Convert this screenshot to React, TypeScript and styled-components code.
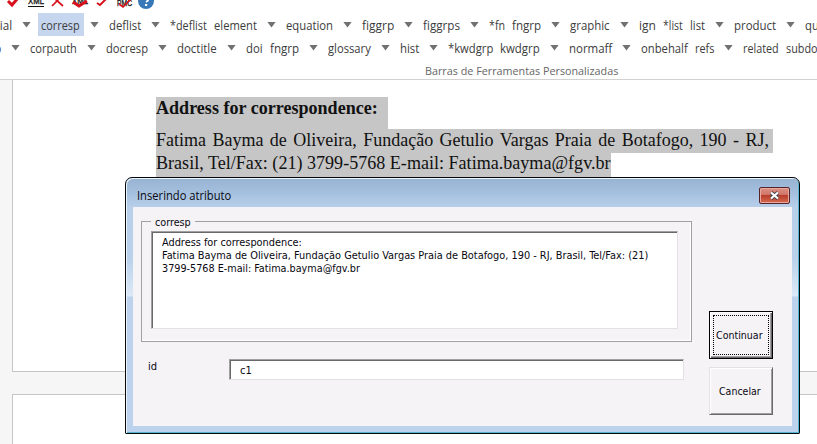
import React, { useLayoutEffect, useRef, useState } from "react";
import styled, { createGlobalStyle, css } from "styled-components";

const GlobalStyle = createGlobalStyle`
  * { box-sizing: border-box; }
  html, body { margin: 0; width: 817px; height: 444px; overflow: hidden; background: #fff; }
`;

const Screen = styled.div`
  position: relative;
  width: 817px;
  height: 444px;
  overflow: hidden;
  background: #fff;
`;

const FitBox = styled.span<{ $w: number }>`
  display: inline-block;
  flex: none;
  width: ${(p) => p.$w}px;
  white-space: nowrap;
`;
const FitInner = styled.span`
  display: inline-block;
  transform-origin: 0 50%;
`;

/* Condenses or stretches its label to an exact width. */
function Fit({ w, children }: { w: number; children: string }) {
  const ref = useRef<HTMLSpanElement>(null);
  const [scale, setScale] = useState(1);
  useLayoutEffect(() => {
    if (ref.current) setScale(w / ref.current.offsetWidth);
  }, [w, children]);
  return (
    <FitBox $w={w}>
      <FitInner ref={ref} style={{ transform: `scaleX(${scale})` }}>
        {children}
      </FitInner>
    </FitBox>
  );
}

const Ribbon = styled.header`
  height: 80px;
  border-bottom: 1px solid #d2d2d2;
  font: 12px/20px "Open Sans", "Noto Sans", sans-serif;
  color: #3c3c3c;
  overflow: hidden;
`;
const IconStrip = styled.div`
  height: 13px;
  svg { display: block; }
`;
const ToolRow = styled.div<{ $indent: number }>`
  display: flex;
  align-items: center;
  height: 23px;
  margin-left: ${(p) => p.$indent}px;
  white-space: nowrap;
`;
const Tool = styled.div<{ $active?: boolean; $menu?: boolean }>`
  display: flex;
  flex: none;
  align-items: center;
  height: 23px;
  padding-top: 2px;
  margin-right: ${(p) => (p.$menu ? 10 : 7)}px;
  ${(p) =>
    p.$active &&
    css`
      background: linear-gradient(#c6d6ee, #c6d6ee) no-repeat 0 0 / 46px 23px;
      margin-left: -3px;
      padding-left: 3px;
    `}
`;
const Caret = styled.i`
  width: 9px;
  height: 6px;
  margin: -2px 0 0 10px;
  background: #717171;
  clip-path: polygon(0 0, 100% 0, 50% 100%);
`;
const GroupTitle = styled.div`
  display: flex;
  height: 20px;
  padding-left: 425px;
  margin-top: 2px;
  font-size: 11px;
  color: #666;
`;

type Item = { t: string; w: number; menu?: boolean; active?: boolean };
const rowOne: Item[] = [
  { t: "special", w: 37, menu: true },
  { t: "corresp", w: 39, menu: true, active: true },
  { t: "deflist", w: 32, menu: true },
  { t: "*deflist", w: 37 },
  { t: "element", w: 43, menu: true },
  { t: "equation", w: 47, menu: true },
  { t: "figgrp", w: 32, menu: true },
  { t: "figgrps", w: 37, menu: true },
  { t: "*fn", w: 16 },
  { t: "fngrp", w: 29, menu: true },
  { t: "graphic", w: 40, menu: true },
  { t: "ign", w: 17 },
  { t: "*list", w: 20 },
  { t: "list", w: 15, menu: true },
  { t: "product", w: 42, menu: true },
  { t: "quote", w: 31 },
];
const rowTwo: Item[] = [
  { t: "corp", w: 23, menu: true },
  { t: "corpauth", w: 47, menu: true },
  { t: "docresp", w: 42, menu: true },
  { t: "doctitle", w: 40, menu: true },
  { t: "doi", w: 17 },
  { t: "fngrp", w: 29, menu: true },
  { t: "glossary", w: 43, menu: true },
  { t: "hist", w: 19, menu: true },
  { t: "*kwdgrp", w: 45 },
  { t: "kwdgrp", w: 40, menu: true },
  { t: "normaff", w: 43, menu: true },
  { t: "onbehalf", w: 47 },
  { t: "refs", w: 19, menu: true },
  { t: "related", w: 36 },
  { t: "subdoc", w: 37 },
];

function Tools({ items, indent }: { items: Item[]; indent: number }) {
  return (
    <ToolRow $indent={indent}>
      {items.map((it) => (
        <Tool key={it.t} $active={it.active} $menu={it.menu}>
          <Fit w={it.w}>{it.t}</Fit>
          {it.menu && <Caret />}
        </Tool>
      ))}
    </ToolRow>
  );
}

const Canvas = styled.main`
  height: 364px;
  padding-left: 12px;
  background: #f6f6f6;
  display: flex;
  flex-direction: column;
  gap: 22px;
`;
const Page = styled.section<{ $first?: boolean }>`
  height: ${(p) => (p.$first ? 292 : 50)}px;
  flex: none;
  background: #fff;
  border: 1px solid #c6c6c6;
  border-right: 0;
  ${(p) => (p.$first ? "border-top: 0; padding: 17px 0 0 143px;" : "border-bottom: 0;")}
`;
const DocLine = styled.div<{ $w: number; $h: number; $lh?: number; $bold?: boolean; $justify?: number }>`
  width: ${(p) => p.$w}px;
  height: ${(p) => p.$h}px;
  background: #c6c6c6;
  color: #111;
  font: ${(p) => (p.$bold ? "bold" : "normal")} ${(p) => (p.$justify ? 18 : 18.4)}px/${(p) => p.$lh ?? 22}px "Liberation Serif", serif;
  white-space: nowrap;
  ${(p) =>
    p.$justify &&
    css`
      padding-right: ${p.$w - p.$justify}px;
      white-space: normal;
      text-align: justify;
      text-align-last: justify;
    `}
`;

const Dialog = styled.div`
  position: absolute;
  left: 125px;
  top: 177px;
  width: 675px;
  height: 257px;
  padding: 0 7px;
  border: 1px solid #05080c;
  border-radius: 7px 7px 1px 1px;
  box-shadow: inset 1px 1px 0 #edf5fc, inset -1px -1px 0 #56b5cf;
  background: linear-gradient(#98b3d2 0, #a6c1df 16px, #b8cfea 29px, #b9d1ea 80px, #dce9f8 118px, #bdd2ed 119px);
  color: #080810;
  font: 11px/13px "DejaVu Sans Condensed", "DejaVu Sans", sans-serif;
`;
const TitleBar = styled.div`
  display: flex;
  justify-content: space-between;
  height: 29px;
  padding: 9px 2px 0 4px;
  font: 12px/18px "Open Sans", sans-serif;
`;
const CloseButton = styled.button`
  width: 31px;
  height: 17px;
  padding: 0;
  border: 1px solid #54242a;
  border-radius: 2px;
  box-shadow: inset 0 0 0 1px #eaa99e;
  background: linear-gradient(#dc9185 0, #cf7466 46%, #b93e2c 50%, #d66b50 100%);
  svg { display: block; margin: 0 auto; }
`;
const Body = styled.div`
  display: flex;
  height: 219px;
  background: #f6f3f7;
`;
const Fields = styled.div`
  width: 576px;
  padding: 8px 0 0 8px;
`;
const Group = styled.fieldset`
  margin: 0;
  width: 551px;
  height: 127px;
  padding: 3px 0 0 9px;
  border: 1px solid #a0a0a0;
  box-shadow: inset -1px -1px 0 #fff;
`;
const Legend = styled.legend`
  margin: 0;
  padding: 1px 4px 0;
  height: 13px;
`;
const sunken = css`
  border: 1px solid;
  border-color: #a0a0a0 #e3e1e4 #e3e1e4 #a0a0a0;
  box-shadow: inset 1px 1px 0 #696969;
  background: #fff;
`;
const TextArea = styled.div`
  ${sunken}
  width: 527px;
  height: 98px;
  padding: 4px 0 0 10px;
  div { height: 13px; }
`;
const IdRow = styled.div`
  display: flex;
  margin-top: 17px;
  padding-left: 7px;
`;
const IdLabel = styled.label`
  width: 81px;
  padding-top: 1px;
`;
const IdField = styled.div`
  ${sunken}
  width: 455px;
  height: 21px;
  padding: 4px 0 0 10px;
`;
const Actions = styled.div`
  display: flex;
  flex-direction: column;
  gap: 8px;
  padding-top: 104px;
`;
const Action = styled.button<{ $default?: boolean }>`
  display: flex;
  align-items: center;
  justify-content: center;
  width: 64px;
  height: 48px;
  padding: 0 3px 0 0;
  color: inherit;
  font: inherit;
  background: #f6f3f7;
  border: 1px solid;
  border-color: #e3e1e4 #696969 #696969 #e3e1e4;
  box-shadow: inset 1px 1px 0 #fff, inset -1px -1px 0 #a0a0a0;
  ${(p) =>
    p.$default &&
    css`
      border-color: #000;
      box-shadow: inset 1px 1px 0 #fff, inset -1px -1px 0 #696969, inset -2px -2px 0 #a0a0a0;
      outline: 1px dotted #000;
      outline-offset: -5px;
    `}
`;

export default function App() {
  return (
    <Screen>
      <GlobalStyle />
      <Ribbon>
        <IconStrip>
          <svg width="160" height="12" viewBox="0 0 160 12">
            <g fontFamily="Liberation Sans" fontSize="9" fill="#111" stroke="#111" strokeWidth="0.3">
              <text x="28" y="4" textLength="16" lengthAdjust="spacingAndGlyphs">XML</text>
              <text x="72" y="4" textLength="16" lengthAdjust="spacingAndGlyphs">XML</text>
              <text x="117" y="6" textLength="15" lengthAdjust="spacingAndGlyphs">PMC</text>
            </g>
            <path d="M28 6.5h16" stroke="#111" />
            <g fill="none" stroke="#d8101c">
              <path d="M8 1l4 4 6-7" strokeWidth="3" />
              <path d="M52 6l9-9M54-2l9 8" strokeWidth="1.7" />
              <path d="M73 2l6 4 8-5" strokeWidth="3" />
              <path d="M97 3l3 2 7-7" strokeWidth="2" />
              <path d="M119 4l4 3 8-8" strokeWidth="1.7" />
            </g>
            <circle cx="146" cy="1" r="8" fill="#3978b8" />
            <path d="M143.5-1q2.5-2 5 0q0 1.500-2.500 3" fill="none" stroke="#fff" strokeWidth="1.800" />
            <path d="M145 4h2.200v2h-2.200z" fill="#fff" />
          </svg>
        </IconStrip>
        <Tools items={rowOne} indent={-25} />
        <Tools items={rowTwo} indent={-22} />
        <GroupTitle>
          <Fit w={193}>Barras de Ferramentas Personalizadas</Fit>
        </GroupTitle>
      </Ribbon>
      <Canvas>
        <Page $first>
          <DocLine $w={232} $h={32} $bold>
            <Fit w={222}>Address for correspondence:</Fit>
          </DocLine>
          <DocLine $w={617} $h={24} $justify={613}>
            Fatima Bayma de Oliveira, Fundação Getulio Vargas Praia de Botafogo, 190 - RJ,
          </DocLine>
          <DocLine $w={455} $h={30} $lh={20}>
            <Fit w={455}>Brasil, Tel/Fax: (21) 3799-5768 E-mail: Fatima.bayma@fgv.br</Fit>
          </DocLine>
        </Page>
        <Page />
      </Canvas>
      <Dialog>
        <TitleBar>
          <Fit w={94}>Inserindo atributo</Fit>
          <CloseButton aria-label="Fechar">
            <svg width="13" height="11" viewBox="0 0 13 11">
              <path d="M3 2.5l7 6M10 2.5l-7 6" stroke="#464652" strokeWidth="4" />
              <path d="M3 2.5l7 6M10 2.5l-7 6" stroke="#fff" strokeWidth="2.2" />
            </svg>
          </CloseButton>
        </TitleBar>
        <Body>
          <Fields>
            <Group>
              <Legend><Fit w={36}>corresp</Fit></Legend>
              <TextArea>
                <div><Fit w={140}>Address for correspondence:</Fit></div>
                <div><Fit w={486}>Fatima Bayma de Oliveira, Fundação Getulio Vargas Praia de Botafogo, 190 - RJ, Brasil, Tel/Fax: (21)</Fit></div>
                <div><Fit w={198}>3799-5768 E-mail: Fatima.bayma@fgv.br</Fit></div>
              </TextArea>
            </Group>
            <IdRow>
              <IdLabel><Fit w={9}>id</Fit></IdLabel>
              <IdField><Fit w={12}>c1</Fit></IdField>
            </IdRow>
          </Fields>
          <Actions>
            <Action $default><Fit w={47}>Continuar</Fit></Action>
            <Action><Fit w={42}>Cancelar</Fit></Action>
          </Actions>
        </Body>
      </Dialog>
    </Screen>
  );
}
